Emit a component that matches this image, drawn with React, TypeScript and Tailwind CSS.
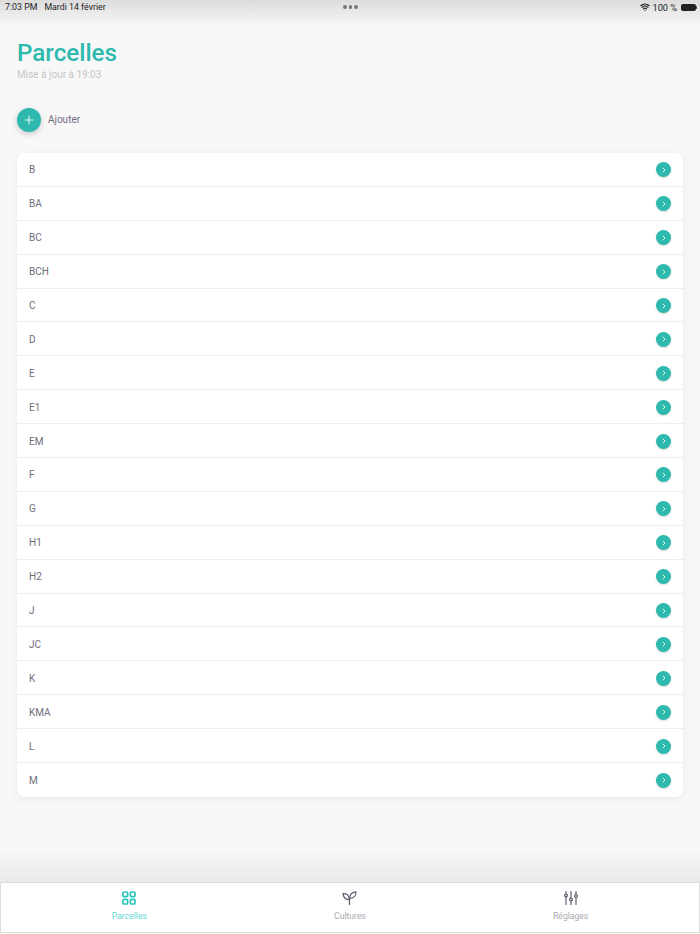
import { ChevronRight, Plus, Wifi } from "lucide-react";

const parcels = ["B", "BA", "BC", "BCH", "C", "D", "E", "E1", "EM", "F", "G", "H1", "H2", "J", "JC", "K", "KMA", "L", "M"];

function GridIcon() {
  return (
    <svg width="14" height="14" viewBox="0 0 14 14" fill="none" stroke="#2cc5ba" strokeWidth="1.7">
      <rect x="1" y="1" width="4.6" height="4.6" rx="1" />
      <rect x="8.4" y="1" width="4.6" height="4.6" rx="1" />
      <rect x="1" y="8.4" width="4.6" height="4.6" rx="1" />
      <rect x="8.4" y="8.4" width="4.6" height="4.6" rx="1" />
    </svg>
  );
}

function SproutIcon() {
  return (
    <svg width="15" height="14" viewBox="0 0 15 14" fill="none" stroke="#5f5d6e" strokeWidth="1.2" strokeLinecap="round" strokeLinejoin="round">
      <path d="M7.5 13.4V6.6" />
      <path d="M7.4 8.6C4.4 8.8 1.4 6.6 1 2.6C4 2.2 6.9 3.6 7.4 8.6Z" />
      <path d="M7.8 6.6C7.8 3.4 10.4 0.9 14 0.8C14.2 4.2 12.2 7 8.9 7.3" />
    </svg>
  );
}

function SlidersIcon() {
  return (
    <svg width="14" height="14" viewBox="0 0 14 14" fill="none" stroke="#5f5d6e" strokeWidth="1.2" strokeLinecap="round">
      <path d="M2 0.6V3M2 6V13.4" />
      <circle cx="2" cy="4.5" r="1.4" />
      <path d="M7 0.6V7M7 10V13.4" />
      <circle cx="7" cy="8.5" r="1.4" />
      <path d="M12 0.6V3.6M12 6.6V13.4" />
      <circle cx="12" cy="5.1" r="1.4" />
    </svg>
  );
}

const tabs = [
  { label: "Parcelles", icon: <GridIcon />, active: true },
  { label: "Cultures", icon: <SproutIcon />, active: false },
  { label: "Réglages", icon: <SlidersIcon />, active: false },
];

function StatusBar() {
  return (
    <div className="flex h-[15px] items-center justify-between pl-[5px] pr-[3px] text-[#222] font-['Roboto',sans-serif]">
      <div className="flex gap-[7px] text-[8.8px]">
        <span>7:03 PM</span>
        <span>Mardi 14 février</span>
      </div>
      <div className="flex items-center gap-[3px] text-[9.2px]">
        <Wifi size={10} strokeWidth={3} className="text-[#222]" />
        <span>100 %</span>
        <div className="ml-[1px] flex items-center">
          <div className="h-[7px] w-[15px] rounded-[2px] bg-[#222]" />
          <div className="h-[3px] w-[1px] bg-[#555]" />
        </div>
      </div>
    </div>
  );
}

export default function App() {
  return (
    <div className="relative flex h-[934px] w-[700px] flex-col overflow-hidden bg-[#f8f8f8] font-['Roboto',sans-serif]">
      <div className="h-[26px] bg-gradient-to-b from-[#dcdcdc] to-[#f8f8f8]">
        <StatusBar />
      </div>
      {/* three dots of the split view handle */}
      <div className="absolute left-[343px] top-[5px] flex gap-[2px]">
        <span className="h-[3.5px] w-[3.5px] rounded-full bg-[#777]" />
        <span className="h-[3.5px] w-[3.5px] rounded-full bg-[#777]" />
        <span className="h-[3.5px] w-[3.5px] rounded-full bg-[#777]" />
      </div>

      <main className="flex-1 px-[17px]">
        <h1 className="mt-[12px] text-[24.2px] leading-[30px] font-medium text-[#2db9ad]">Parcelles</h1>
        <p className="text-[10px] leading-[14px] text-[#c6c6c8]">Mise à jour à 19:03</p>

        <button type="button" className="mt-[26px] flex items-center gap-[7px]">
          <span className="flex h-[24px] w-[24px] items-center justify-center rounded-full bg-[#2db9ad] shadow-[0_2px_6px_rgba(0,0,0,0.2)]">
            <Plus size={14} strokeWidth={1.5} className="text-white" />
          </span>
          <span className="text-[10px] text-[#6f6d7c] -translate-y-[1px]">Ajouter</span>
        </button>

        <section className="mt-[21px] overflow-hidden rounded-[8px] bg-white shadow-[0_2px_8px_rgba(0,0,0,0.06)]">
          {parcels.map((parcel, index) => (
            <div
              key={parcel}
              className={`flex h-[33.9px] items-center justify-between pl-[12px] pr-[12px] pt-[1px] ${index < parcels.length - 1 ? "border-b border-[#eeeeee]" : ""}`}
            >
              <span className="text-[10px] text-[#6f6d7c]">{parcel}</span>
              <span className="flex h-[15px] w-[15px] items-center justify-center rounded-full bg-[#2db9ad] shadow-[0_1px_2px_rgba(0,0,0,0.15)]">
                <ChevronRight size={8} strokeWidth={3} className="text-[#d8f3f0]" />
              </span>
            </div>
          ))}
        </section>
      </main>

      <div className="h-[34px] bg-gradient-to-b from-[#f8f8f8] to-[#e9e9e9]" />

      <nav className="mb-[1px] grid h-[51px] grid-cols-3 border border-[#dddddd] bg-white px-[18px]">
        {tabs.map(({ label, icon, active }) => (
          <div key={label} className="flex flex-col items-center pt-[8px]">
            {icon}
            <span className={`mt-[5px] text-[8.6px] leading-[12px] ${active ? "text-[#5fd8ce]" : "text-[#a9a9ae]"}`}>{label}</span>
          </div>
        ))}
      </nav>
    </div>
  );
}
